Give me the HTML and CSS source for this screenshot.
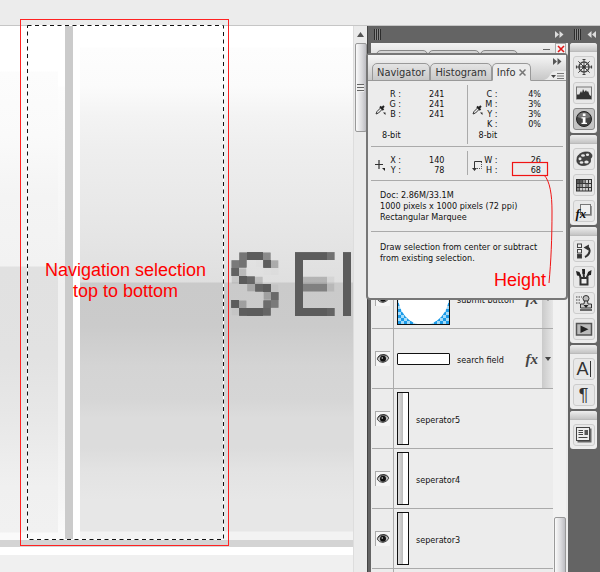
FILE: index.html
```
<!DOCTYPE html>
<html lang="en">
<head>
    <meta charset="UTF-8">
    <meta name="viewport" content="width=device-width, initial-scale=1.0">
    <title>Navigation selection</title>
    <link rel="stylesheet" href="styles.css">
</head>
<body>
    <!-- shared icons -->
    <svg class="defs" width="0" height="0" aria-hidden="true">
        <symbol id="dropper" viewBox="0 0 11 11">
            <path d="M1 10 L2 7.500 L6 3.500 L7.500 5 L3.500 9 Z" fill="#eee" stroke="#333" stroke-width="1"/>
            <path d="M5 2.500 L8.500 6 M6.500 4.500 L9 2" stroke="#222" stroke-width="2"/>
            <path d="M8 8.500 L10.500 8.500 L10.500 11 Z" fill="#222"/>
        </symbol>
        <symbol id="eye" viewBox="0 0 14 14">
            <path d="M1 7 Q3 3 7 3 Q11 3 13 6 Q11 10 7 10.500 Q3 10.500 1 7Z" fill="#bbb" stroke="#555" stroke-width="1"/>
            <path d="M1.500 5.500 Q4 2 8 2.500 Q11 3 12.500 5" fill="none" stroke="#333" stroke-width="1"/>
            <circle cx="7" cy="6.800" r="3" fill="#111"/>
            <circle cx="6.300" cy="6" r=".8" fill="#ddd"/>
        </symbol>
        <symbol id="forward" viewBox="0 0 9 7">
            <path d="M0 0 L4 3.500 L0 7Z M4.500 0 L8.500 3.500 L4.500 7Z" fill="currentColor"/>
        </symbol>
        <filter id="zoomed" filterUnits="userSpaceOnUse" x="0" y="0" width="136" height="88">
            <feGaussianBlur in="SourceGraphic" stdDeviation="1" result="soft"/>
            <feFlood x="3" y="3" width="2" height="2"/>
            <feComposite width="8" height="8"/>
            <feTile result="grid"/>
            <feComposite in="soft" in2="grid" operator="in"/>
            <feMorphology operator="dilate" radius="3"/>
        </filter>
    </svg>

    <div class="app">
        <div class="topbar"></div>

        <div class="workspace">
            <div class="document">
                <div class="nav-image">
                    <div class="fade fade-left"></div>
                    <div class="fade-edge"></div>
                    <div class="line-grey"></div>
                    <div class="line-white"></div>
                    <div class="fade fade-right"></div>
                </div>
                <div class="nav-bottom"></div>
                <svg class="nav-label" width="136" height="88">
                    <text x="4 64 112" y="71" filter="url(#zoomed)">SEI</text>
                </svg>
            </div>

            <div class="scrollbar">
                <svg width="7" height="5" viewBox="0 0 7 5"><path d="M3.500 0 L7 5 H0Z" fill="#555"/></svg>
                <div class="scroll-thumb"><span></span></div>
            </div>

            <div class="dock">
                <div class="dock-head">
                    <span class="grip"></span>
                    <svg width="9" height="7"><use href="#forward"/></svg>
                </div>
                <div class="layers">
                    <div class="layers-head">
                        <span class="back-tab"></span><span class="back-tab"></span><span class="back-tab"></span>
                        <span class="minimize"></span>
                        <button class="close" aria-label="Close">
                            <svg width="8" height="8" viewBox="0 0 8 8"><path d="M1 1 L7 7 M7 1 L1 7" stroke="#e01818" stroke-width="1.600"/></svg>
                        </button>
                    </div>
                    <div class="layers-body">
                        <div class="layer-list">
                            <div class="layer">
                                <div class="visible"><svg width="14" height="14"><use href="#eye"/></svg></div>
                                <div class="thumb thumb-button">
                                    <svg width="51" height="51" viewBox="0 0 51 51">
                                        <defs><pattern id="check" width="6" height="6" patternUnits="userSpaceOnUse"><rect width="6" height="6" fill="#a4dcfa"/><rect width="3" height="3" fill="#1c9be8"/><rect x="3" y="3" width="3" height="3" fill="#1c9be8"/></pattern></defs>
                                        <rect width="51" height="51" fill="url(#check)"/>
                                        <ellipse cx="25.500" cy="23" rx="25.500" ry="29" fill="#fff"/>
                                    </svg>
                                </div>
                                <span class="layer-name">submit button</span>
                                <span class="fx">fx</span>
                                <span class="expand"></span>
                            </div>
                            <div class="layer">
                                <div class="visible"><svg width="14" height="14"><use href="#eye"/></svg></div>
                                <div class="thumb thumb-field"></div>
                                <span class="layer-name">search field</span>
                                <span class="fx">fx</span>
                                <span class="expand"></span>
                            </div>
                            <div class="layer">
                                <div class="visible"><svg width="14" height="14"><use href="#eye"/></svg></div>
                                <div class="thumb thumb-line"></div>
                                <span class="layer-name">seperator5</span>
                            </div>
                            <div class="layer">
                                <div class="visible"><svg width="14" height="14"><use href="#eye"/></svg></div>
                                <div class="thumb thumb-line"></div>
                                <span class="layer-name">seperator4</span>
                            </div>
                            <div class="layer">
                                <div class="visible"><svg width="14" height="14"><use href="#eye"/></svg></div>
                                <div class="thumb thumb-line"></div>
                                <span class="layer-name">seperator3</span>
                            </div>
                            <div class="layer">
                                <div class="visible"></div>
                                <div class="thumb thumb-line"></div>
                            </div>
                        </div>
                        <div class="layer-scroll"><div class="layer-scroll-thumb"></div></div>
                    </div>
                </div>

                <!-- floating info palette -->
                <div class="info">
                    <div class="info-head">
                        <div class="tabs">
                            <button class="tab">Navigator</button>
                            <button class="tab">Histogram</button>
                            <button class="tab active">Info <svg width="7" height="7" viewBox="0 0 7 7"><path d="M.5.5 L6.500 6.500 M6.500.5 L.5 6.500" stroke="#777" stroke-width="1.500"/></svg></button>
                        </div>
                        <svg class="info-forward" width="9" height="7"><use href="#forward"/></svg>
                        <svg class="info-menu" width="22" height="9" viewBox="0 0 22 9">
                            <path d="M0 9 Q4 8 6 4 Q8 0 12 0 H22 V9Z" fill="#ececec"/>
                            <path d="M7 4 H12 L9.500 7Z" fill="#444"/>
                            <path d="M13 2.500 H20 M13 5 H20 M13 7.500 H20" stroke="#777" stroke-width="1"/>
                        </svg>
                    </div>
                    <div class="readouts colours">
                        <div class="readout">
                            <svg width="11" height="11"><use href="#dropper"/></svg>
                            <table>
                                <tr><th>R :</th><td>241</td></tr>
                                <tr><th>G :</th><td>241</td></tr>
                                <tr><th>B :</th><td>241</td></tr>
                                <tr><th>&nbsp;</th><td></td></tr>
                            </table>
                            <p>8-bit</p>
                        </div>
                        <div class="readout">
                            <svg width="11" height="11"><use href="#dropper"/></svg>
                            <table>
                                <tr><th>C :</th><td>4%</td></tr>
                                <tr><th>M :</th><td>3%</td></tr>
                                <tr><th>Y :</th><td>3%</td></tr>
                                <tr><th>K :</th><td>0%</td></tr>
                            </table>
                            <p>8-bit</p>
                        </div>
                    </div>
                    <div class="readouts">
                        <div class="readout">
                            <svg width="11" height="11" viewBox="0 0 11 11"><path d="M4 0 V9 M0 4.500 H8" stroke="#333" stroke-width="1.200"/><path d="M7 8 H10 V11Z" fill="#222"/></svg>
                            <table>
                                <tr><th>X :</th><td>140</td></tr>
                                <tr><th>Y :</th><td>78</td></tr>
                            </table>
                        </div>
                        <div class="readout">
                            <svg width="11" height="11" viewBox="0 0 11 11"><path d="M2.500 9 V1.500 H10" fill="none" stroke="#333"/><path d="M3 8.500 H9.500 V2" fill="none" stroke="#555" stroke-dasharray="1 1"/><path d="M0 8 H5 L2.500 11Z" fill="#333"/></svg>
                            <table>
                                <tr><th>W :</th><td>26</td></tr>
                                <tr><th>H :</th><td>68</td></tr>
                            </table>
                        </div>
                    </div>
                    <div class="info-text doc">
                        Doc: 2.86M/33.1M<br>
                        1000 pixels x 1000 pixels (72 ppi)<br>
                        Rectangular Marquee
                    </div>
                    <div class="info-text hint">
                        Draw selection from center or subtract<br>
                        from existing selection.
                    </div>
                    <svg class="pointer" width="48" height="124" viewBox="0 0 48 124">
                        <rect x="1.500" y="1.500" width="35" height="13" fill="none" stroke="#f01414" stroke-width="1.200"/>
                        <path d="M33 14 C39 20 41 34 41 50 C41 78 40 100 38 122" fill="none" stroke="#f01414"/>
                    </svg>
                    <span class="note note-height">Height</span>
                </div>
            </div>

            <div class="tools">
                <div class="tools-head">
                    <span class="grip"></span>
                    <svg class="back" width="9" height="7"><use href="#forward"/></svg>
                </div>
                <div class="tool-group">
                    <button aria-label="Navigator"><svg width="18" height="18" viewBox="0 0 18 18"><g fill="none" stroke="#444"><circle cx="9" cy="9" r="5" stroke-width="1.500"/><path d="M9 1 V17 M1 9 H17 M3.300 3.300 L14.700 14.700 M14.700 3.300 L3.300 14.700" stroke-width="1"/><path d="M7.500 1.500 H10.500 M7.500 16.500 H10.500 M1.500 7.500 V10.500 M16.500 7.500 V10.500" stroke-width="1.200"/></g><circle cx="9" cy="9" r="1.800" fill="#333"/></svg></button>
                    <button aria-label="Histogram"><svg width="18" height="18" viewBox="0 0 18 18"><rect x="1.500" y="3" width="15" height="12" fill="#e4e4e4" stroke="#777"/><path d="M2 15 V11 L3 10 L4 11 L6 7 L7 9 L8 5 L9.500 8 L11 6 L12 8 L13 7 L14.500 11 L16 12 V15Z" fill="#333"/></svg></button>
                    <button class="on" aria-label="Info"><svg width="18" height="18" viewBox="0 0 18 18"><circle cx="9" cy="9" r="7.500" fill="#444" stroke="#222"/><path d="M2.500 7 A7 7 0 0 1 15.500 7 Q9 10 2.500 7Z" fill="#777"/><rect x="7.800" y="3.500" width="2.700" height="2.500" fill="#fff"/><path d="M6.500 7.200 H10.500 V12.700 H12 V14 H6.500 V12.700 H7.800 V8.500 H6.500Z" fill="#fff"/></svg></button>
                </div>
                <div class="tool-group">
                    <button aria-label="Color"><svg width="18" height="18" viewBox="0 0 18 18"><path d="M2 9 C2 5 6 2.500 10 2 C14 1.500 17 3 17 6 C17 8 15 8 15.500 10 C16 13 13 15.500 8 15.500 C4 15.500 1 13 2 9Z" fill="#444" stroke="#222" stroke-width=".6"/><g fill="#e8e8e8"><ellipse cx="8" cy="5.500" rx="1.900" ry="1.300"/><ellipse cx="12.500" cy="4.800" rx="1.600" ry="1.200"/><ellipse cx="5" cy="8.800" rx="1.500" ry="1.500"/><ellipse cx="6.500" cy="12.500" rx="1.800" ry="1.300"/><ellipse cx="11.500" cy="12" rx="2.200" ry="1.500"/></g></svg></button>
                    <button aria-label="Swatches"><svg width="18" height="18" viewBox="0 0 18 18"><rect x="1" y="3" width="16" height="12.500" fill="#333"/><g fill="#555"><rect x="2" y="4" width="2.500" height="3"/><rect x="5" y="4" width="2.500" height="3"/></g><g fill="#888"><rect x="8" y="4" width="2.500" height="3"/><rect x="2" y="8" width="2.500" height="3"/><rect x="5" y="8" width="2.500" height="3"/><rect x="2" y="12" width="2.500" height="2.500"/><rect x="11" y="8" width="2.500" height="3"/></g><g fill="#ccc"><rect x="11" y="4" width="2" height="3"/><rect x="14" y="4" width="2" height="3"/><rect x="8" y="8" width="2.500" height="3"/><rect x="14" y="8" width="2" height="3"/><rect x="5" y="12" width="2.500" height="2.500"/><rect x="8" y="12" width="2.500" height="2.500"/><rect x="11" y="12" width="2" height="2.500"/><rect x="14" y="12" width="2" height="2.500"/></g></svg></button>
                    <button class="styles" aria-label="Styles"><svg width="18" height="18" viewBox="0 0 18 18"><rect x="5.500" y="2.500" width="10" height="10" fill="#f0f0f0" stroke="#777"/><path d="M6 13.500 H16.500 V4" fill="none" stroke="#999"/></svg><i>fx</i></button>
                </div>
                <div class="tool-group">
                    <button aria-label="History"><svg width="18" height="18" viewBox="0 0 18 18"><g fill="#eee" stroke="#444"><rect x="2.500" y="2" width="4" height="3.500"/><rect x="2.500" y="7.500" width="4" height="3.500"/><rect x="2.500" y="12.500" width="4" height="3.500" fill="#333"/></g><path d="M10 15 C15 13 16 7 12.500 5.500" fill="none" stroke="#333" stroke-width="2"/><path d="M8.500 5.500 L14 2.500 L13.500 8.500Z" fill="#333"/></svg></button>
                    <button aria-label="Tool presets"><svg width="18" height="18" viewBox="0 0 18 18"><path d="M6.500 11 L4 6 M9 10 L8.500 4 M11 11 L14 5" stroke="#333" stroke-width="2"/><path d="M1 3 L4.500 4 L6 8 L2 7.500Z M7 1 H10 V6 H7.500Z M16.500 2 L16 7 L12.500 7.500 L13 4Z" fill="#222"/><rect x="5.500" y="10" width="7" height="6.500" fill="#eee" stroke="#333" stroke-width="2"/></svg></button>
                    <button aria-label="Clone source"><svg width="18" height="18" viewBox="0 0 18 18"><path d="M1 3 H7 M1 6 H6 M1 9 H6" stroke="#444" stroke-dasharray="1.500 1"/><circle cx="11" cy="4.500" r="3" fill="#bbb" stroke="#333"/><path d="M9.500 7 H12.500 L13 10 H16.500 V14 H5.500 V10 H9Z" fill="#ccc" stroke="#333"/><path d="M8.500 11 H13.500 L11 14Z" fill="#222"/><path d="M5 16 H17" stroke="#333" stroke-width="1.400"/></svg></button>
                    <button aria-label="Actions"><svg width="18" height="18" viewBox="0 0 18 18"><rect x="1.500" y="3.500" width="15" height="11.500" fill="#bbb" stroke="#555" stroke-width="1.500"/><path d="M5.500 5.500 L13.500 9.200 L5.500 13Z" fill="#222"/></svg></button>
                </div>
                <div class="tool-group">
                    <button class="glyph" aria-label="Character">A<span class="caret"></span></button>
                    <button class="glyph" aria-label="Paragraph">¶</button>
                </div>
                <div class="tool-group">
                    <button aria-label="Layer comps"><svg width="18" height="18" viewBox="0 0 18 18"><rect x="2.500" y="2.500" width="14" height="14" fill="#666"/><rect x="1.500" y="1.500" width="13" height="13" fill="#eee" stroke="#444"/><path d="M3.500 4.500 H8 M3.500 6.500 H8 M3.500 8.500 H8 M3.500 11.500 H12.500" stroke="#444"/><rect x="9.500" y="4" width="3.500" height="5" fill="#555"/></svg></button>
                </div>
            </div>
        </div>

        <!-- selection marquee and notes drawn over the document -->
        <svg class="marquee" width="210" height="529" viewBox="0 0 210 529">
            <rect x="7.500" y="6.500" width="196" height="514" fill="none" stroke="#fff"/>
            <rect x="7.500" y="6.500" width="196" height="514" fill="none" stroke="#111" stroke-dasharray="4 3.500"/>
            <rect x=".5" y=".5" width="208" height="526" fill="none" stroke="#f22"/>
        </svg>
        <span class="note note-nav">Navigation selection<br>top to bottom</span>
    </div>
</body>
</html>
```
FILE: styles.css
```
body {
    margin: 0;
    background-color: #f0f0f0;
    font-family: "DejaVu Sans Condensed", "Noto Sans", sans-serif;
    font-size: 9px;
    color: #111;
}
button {
    font: inherit;
    color: inherit;
    padding: 0;
    margin: 0;
    border: 0;
}
svg {
    display: block;
}
.defs {
    position: absolute;
}
.app {
    position: relative;
    display: flex;
    flex-direction: column;
    height: 100vh;
    overflow: hidden;
}
.topbar {
    height: 25px;
    flex-shrink: 0;
    background-color: #ececec;
    border-bottom: 1px solid #c6c6c6;
}
.workspace {
    display: flex;
    flex: 1;
    min-height: 0;
}

/* document */
.document {
    position: relative;
    flex: 1;
    min-width: 0;
    overflow: hidden;
}
.nav-image {
    display: grid;
    grid-template-columns: 58px 7px 8px 7px 1fr;
    height: 514px;
    background-color: #fff;
}
.fade-left {
    background: linear-gradient(#fff 0, #fff 45px, #fcfcfc 46px, #fafafa 110px, #f4f4f4 170px, #f2f2f2 240px, #e1e1e1 241px, #e2e2e2 330px, #e7e7e7 385px, #ebebeb 420px, #f0f0f0 460px, #f1f1f1 506px, #fafafa 507px);
}
.fade-edge {
    background: linear-gradient(#fff 0, #fff 60px, #fdfdfd 61px, #f6f6f6 190px, #f0f0f0 260px, #f0f0f0 400px, #f6f6f6 480px, #fafafa 507px);
}
.line-grey {
    background-color: #cbcbcb;
}
.line-white {
    background-color: #fff;
}
.fade-right {
    background: linear-gradient(#fff 0, #fff 21px, #fdfdfd 22px, #fbfbfb 60px, #f3f3f3 90px, #eee 125px, #e9e9e9 175px, #e4e4e4 218px, #dfdfdf 256px, #cacaca 257px, #cbcbcb 300px, #d4d4d4 340px, #d6d6d6 374px, #dcdcdc 392px, #dcdcdc 422px, #e3e3e3 445px, #e7e7e7 475px, #e7e7e7 505px, #f3f3f3 506px);
}
.nav-bottom {
    height: 7px;
    background-color: #d4d4d4;
    border-bottom: 8px solid #fff;
}
.nav-label {
    position: absolute;
    left: 223px;
    top: 218px;
    font-family: Inter, sans-serif;
    font-size: 84px;
    fill: #5c5c5c;
}
.scrollbar {
    display: flex;
    flex-direction: column;
    align-items: center;
    width: 13px;
    padding-top: 6px;
    background-color: #ebebeb;
    border-left: 1px solid #ddd;
}
.scroll-thumb {
    display: flex;
    align-items: center;
    justify-content: center;
    box-sizing: border-box;
    width: 12px;
    height: 89px;
    margin-top: 6px;
    border: 1px solid #999;
    border-radius: 2px;
    background: linear-gradient(90deg, #fafafa, #d9d9dc 60%, #bdbdc2);
}
.scroll-thumb span {
    width: 7px;
    height: 8px;
    background: repeating-linear-gradient(#666 0, #666 1px, #eee 1px, #eee 3px);
}

/* palettes */
.dock {
    position: relative;
    display: flex;
    flex-direction: column;
    width: 202px;
    box-sizing: border-box;
    padding: 0 1px 0 3px;
    background-color: #646464;
    border-left: 1px solid #444;
}
.dock-head,
.tools-head {
    display: flex;
    align-items: center;
    justify-content: space-between;
    height: 17px;
    flex-shrink: 0;
    color: #ddd;
}
.dock-head {
    padding: 0 4px 0 3px;
}
.grip {
    width: 7px;
    height: 11px;
    background: repeating-linear-gradient(90deg, #2c2c2c 0, #2c2c2c 1px, #888 1px, #888 2px);
}
.layers {
    display: flex;
    flex-direction: column;
    flex: 1;
    min-height: 0;
    background-color: #ececec;
}
.layers-head {
    display: flex;
    height: 24px;
    flex-shrink: 0;
    padding-left: 5px;
    background: linear-gradient(#f2f2f2, #ccc);
}
.back-tab {
    width: 50px;
    height: 12px;
    margin-top: 7px;
    border: 1px solid #888;
    border-radius: 5px 5px 0 0;
    background-color: #d4d4d4;
}
.back-tab:nth-child(3) {
    width: 36px;
}
.minimize {
    width: 7px;
    height: 1px;
    margin: 6px 5px 0 auto;
    background-color: #666;
}
.close {
    display: flex;
    align-items: center;
    justify-content: center;
    width: 11px;
    height: 11px;
    margin-right: 2px;
    background-color: #f4f4f4;
    border: 1px solid #aaa;
}
.layers-body {
    display: flex;
    flex: 1;
    min-height: 0;
    overflow: hidden;
    padding: 202px 2px 0 1px;
}
.layer-list {
    flex: 1;
}
.layer {
    display: flex;
    align-items: center;
    box-sizing: border-box;
    height: 60px;
    border-bottom: 1px solid #aaa;
}
.visible {
    display: flex;
    align-items: center;
    align-self: stretch;
    width: 18px;
    padding-left: 3px;
    margin-right: 3px;
    border-right: 1px solid #aaa;
}
.visible svg {
    border-left: 1px solid #aaa;
    border-top: 1px solid #aaa;
    background-color: #f5f5f5;
}
.thumb {
    box-sizing: border-box;
    border: 1px solid #111;
    background-color: #fff;
}
.thumb-button {
    width: 53px;
    height: 53px;
}
.thumb-field {
    width: 53px;
    height: 12px;
    border-radius: 1px;
}
.thumb-line {
    width: 12px;
    height: 53px;
    background: linear-gradient(90deg, #ddd 0, #bbb 5px, #fff 5px);
}
.layer-name {
    margin-left: 7px;
    padding-top: 2px;
}
.fx {
    margin: 0 4px 0 auto;
    font-family: "Liberation Serif", serif;
    font-size: 15px;
    font-style: italic;
    font-weight: bold;
    line-height: 12px;
    color: #444;
}
.expand {
    display: flex;
    align-items: center;
    justify-content: center;
    align-self: stretch;
    width: 11px;
    background: linear-gradient(90deg, #cacaca, #e6e6e6);
}
.expand::before {
    content: "";
    border: 3px solid transparent;
    border-top: 4px solid #444;
    border-bottom: 0;
}
.layer-scroll {
    display: flex;
    width: 12px;
    padding-left: 1px;
    background-color: #f2f2f2;
}
.layer-scroll-thumb {
    flex: 1;
    height: 200px;
    margin-top: 248px;
    border: 1px solid #999;
    border-radius: 2px;
    background: linear-gradient(90deg, #fafafa, #d9d9dc 60%, #bdbdc2);
}

/* info palette */
.info {
    position: absolute;
    left: -2px;
    top: 27px;
    width: 198px;
    height: 243px;
    border: 2px solid #777;
    border-radius: 4px;
    background-color: #ececec;
}
.info-head {
    position: relative;
    display: flex;
    align-items: flex-end;
    height: 26px;
    box-sizing: border-box;
    padding-left: 4px;
    border-bottom: 1px solid #999;
    background: linear-gradient(#f6f6f6, #c8c8c8);
}
.tabs {
    display: flex;
    margin-bottom: -1px;
}
.tab {
    display: flex;
    align-items: center;
    height: 18px;
    box-sizing: border-box;
    padding: 0 4px;
    border: 1px solid #999;
    border-radius: 5px 5px 0 0;
    background: linear-gradient(#e4e4e4, #c8c8c8);
    font-size: 11px;
    color: #333;
}
.tab.active {
    gap: 3px;
    border-bottom-color: #ececec;
    background: #ececec;
}
.info-forward {
    position: absolute;
    right: 4px;
    top: 3px;
    color: #555;
}
.info-menu {
    position: absolute;
    right: 0;
    bottom: 0;
}
.readouts {
    display: flex;
    margin: 0 3px;
    padding: 4px 0 5px;
    border-bottom: 1px solid #aaa;
}
.readout {
    flex: 1;
    display: grid;
    grid-template-columns: 11px 1fr;
    align-items: center;
    padding: 4px 22px 0 4px;
    line-height: 10px;
}
.readout:first-child {
    border-right: 1px solid #aaa;
}
.colours {
    padding-bottom: 2px;
}
.readout p {
    grid-column: 2;
    margin: 1px 0 4px -4px;
}
.readout table {
    width: 100%;
    border-collapse: collapse;
}
.readout th,
.readout td {
    padding: 0;
    font-weight: normal;
    text-align: right;
}
.readout th {
    width: 15px;
}
.info-text {
    margin: 0 3px;
    padding: 9px 9px 0;
    line-height: 11px;
}
.doc {
    height: 41px;
    border-bottom: 1px solid #aaa;
}
.hint {
    padding-top: 10px;
}
.pointer {
    position: absolute;
    left: 143px;
    top: 106px;
}

/* icon strip */
.tools {
    width: 31px;
    box-sizing: border-box;
    padding: 0 3px 0 1px;
    background-color: #646464;
}
.tools-head {
    padding: 0 1px 0 4px;
}
.back {
    transform: rotate(180deg);
}
.tool-group {
    display: flex;
    flex-direction: column;
    align-items: center;
    gap: 4px;
    margin-bottom: 2px;
    padding-bottom: 3px;
    border-radius: 3px;
    background-color: #ececec;
}
.tool-group::before {
    content: "";
    width: 100%;
    height: 8px;
    border-bottom: 1px solid #bbb;
    border-radius: 3px 3px 0 0;
    background: linear-gradient(#eee, #c4c4c4);
}
.tool-group button {
    position: relative;
    display: flex;
    align-items: center;
    justify-content: center;
    width: 22px;
    height: 22px;
    box-sizing: border-box;
    border: 1px solid #ccc;
    border-radius: 3px;
    background-color: #e8e8e8;
}
.tool-group .on {
    border-color: #888;
    background-color: #c4c4c4;
}
.styles i {
    position: absolute;
    left: 2px;
    bottom: 1px;
    font: italic bold 13px/13px "Liberation Serif", serif;
}
.tool-group .glyph {
    font-family: "Liberation Sans", sans-serif;
    font-size: 18px;
    color: #333;
}
.caret {
    width: 1px;
    height: 16px;
    margin-left: 1px;
    background-color: #333;
}

/* notes */
.marquee {
    position: absolute;
    left: 20px;
    top: 19px;
}
.note {
    position: absolute;
    font-family: "Liberation Sans", sans-serif;
    font-size: 18px;
    line-height: 21px;
    color: #f00;
    text-align: center;
    white-space: nowrap;
}
.note-nav {
    left: 45px;
    top: 260px;
}
.note-height {
    right: 20px;
    bottom: 7px;
}
```
